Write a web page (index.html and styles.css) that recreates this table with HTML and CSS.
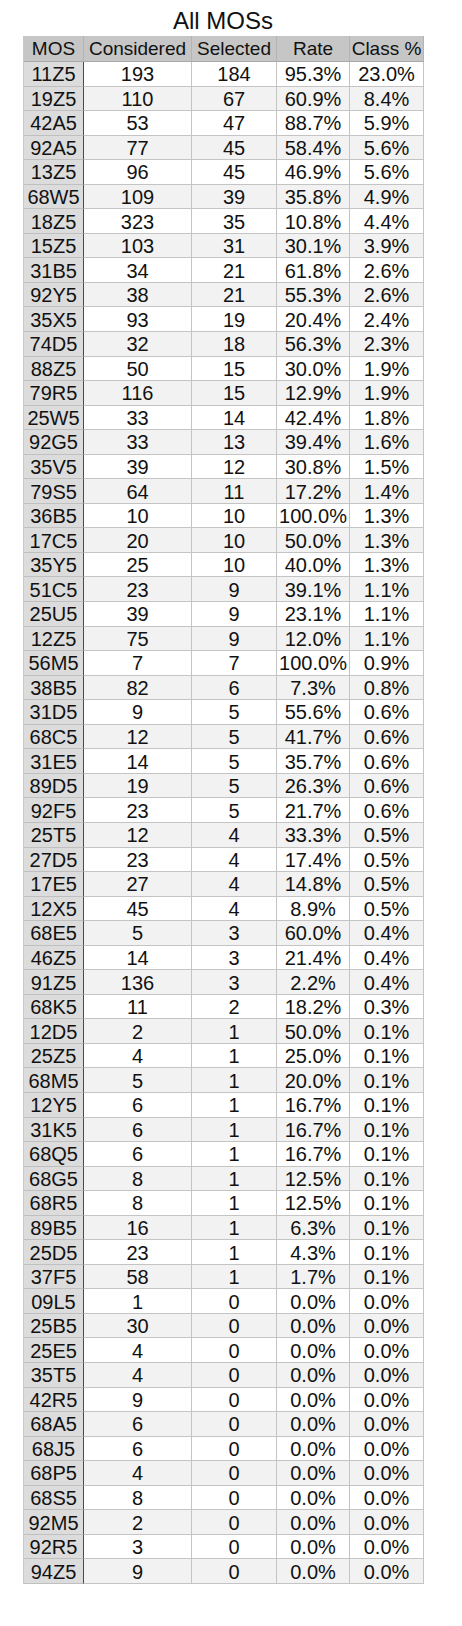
FILE: index.html
```html
<!DOCTYPE html>
<html>
<head>
<meta charset="utf-8">
<link rel="stylesheet" href="styles.css">
</head>
<body>
<div class="title">All MOSs</div>
<div class="sheet">
<div class="row head"><div>MOS</div><div>Considered</div><div>Selected</div><div>Rate</div><div>Class %</div></div>
<div class="row"><div>11Z5</div><div>193</div><div>184</div><div>95.3%</div><div>23.0%</div></div>
<div class="row"><div>19Z5</div><div>110</div><div>67</div><div>60.9%</div><div>8.4%</div></div>
<div class="row"><div>42A5</div><div>53</div><div>47</div><div>88.7%</div><div>5.9%</div></div>
<div class="row"><div>92A5</div><div>77</div><div>45</div><div>58.4%</div><div>5.6%</div></div>
<div class="row"><div>13Z5</div><div>96</div><div>45</div><div>46.9%</div><div>5.6%</div></div>
<div class="row"><div>68W5</div><div>109</div><div>39</div><div>35.8%</div><div>4.9%</div></div>
<div class="row"><div>18Z5</div><div>323</div><div>35</div><div>10.8%</div><div>4.4%</div></div>
<div class="row"><div>15Z5</div><div>103</div><div>31</div><div>30.1%</div><div>3.9%</div></div>
<div class="row"><div>31B5</div><div>34</div><div>21</div><div>61.8%</div><div>2.6%</div></div>
<div class="row"><div>92Y5</div><div>38</div><div>21</div><div>55.3%</div><div>2.6%</div></div>
<div class="row"><div>35X5</div><div>93</div><div>19</div><div>20.4%</div><div>2.4%</div></div>
<div class="row"><div>74D5</div><div>32</div><div>18</div><div>56.3%</div><div>2.3%</div></div>
<div class="row"><div>88Z5</div><div>50</div><div>15</div><div>30.0%</div><div>1.9%</div></div>
<div class="row"><div>79R5</div><div>116</div><div>15</div><div>12.9%</div><div>1.9%</div></div>
<div class="row"><div>25W5</div><div>33</div><div>14</div><div>42.4%</div><div>1.8%</div></div>
<div class="row"><div>92G5</div><div>33</div><div>13</div><div>39.4%</div><div>1.6%</div></div>
<div class="row"><div>35V5</div><div>39</div><div>12</div><div>30.8%</div><div>1.5%</div></div>
<div class="row"><div>79S5</div><div>64</div><div>11</div><div>17.2%</div><div>1.4%</div></div>
<div class="row"><div>36B5</div><div>10</div><div>10</div><div>100.0%</div><div>1.3%</div></div>
<div class="row"><div>17C5</div><div>20</div><div>10</div><div>50.0%</div><div>1.3%</div></div>
<div class="row"><div>35Y5</div><div>25</div><div>10</div><div>40.0%</div><div>1.3%</div></div>
<div class="row"><div>51C5</div><div>23</div><div>9</div><div>39.1%</div><div>1.1%</div></div>
<div class="row"><div>25U5</div><div>39</div><div>9</div><div>23.1%</div><div>1.1%</div></div>
<div class="row"><div>12Z5</div><div>75</div><div>9</div><div>12.0%</div><div>1.1%</div></div>
<div class="row"><div>56M5</div><div>7</div><div>7</div><div>100.0%</div><div>0.9%</div></div>
<div class="row"><div>38B5</div><div>82</div><div>6</div><div>7.3%</div><div>0.8%</div></div>
<div class="row"><div>31D5</div><div>9</div><div>5</div><div>55.6%</div><div>0.6%</div></div>
<div class="row"><div>68C5</div><div>12</div><div>5</div><div>41.7%</div><div>0.6%</div></div>
<div class="row"><div>31E5</div><div>14</div><div>5</div><div>35.7%</div><div>0.6%</div></div>
<div class="row"><div>89D5</div><div>19</div><div>5</div><div>26.3%</div><div>0.6%</div></div>
<div class="row"><div>92F5</div><div>23</div><div>5</div><div>21.7%</div><div>0.6%</div></div>
<div class="row"><div>25T5</div><div>12</div><div>4</div><div>33.3%</div><div>0.5%</div></div>
<div class="row"><div>27D5</div><div>23</div><div>4</div><div>17.4%</div><div>0.5%</div></div>
<div class="row"><div>17E5</div><div>27</div><div>4</div><div>14.8%</div><div>0.5%</div></div>
<div class="row"><div>12X5</div><div>45</div><div>4</div><div>8.9%</div><div>0.5%</div></div>
<div class="row"><div>68E5</div><div>5</div><div>3</div><div>60.0%</div><div>0.4%</div></div>
<div class="row"><div>46Z5</div><div>14</div><div>3</div><div>21.4%</div><div>0.4%</div></div>
<div class="row"><div>91Z5</div><div>136</div><div>3</div><div>2.2%</div><div>0.4%</div></div>
<div class="row"><div>68K5</div><div>11</div><div>2</div><div>18.2%</div><div>0.3%</div></div>
<div class="row"><div>12D5</div><div>2</div><div>1</div><div>50.0%</div><div>0.1%</div></div>
<div class="row"><div>25Z5</div><div>4</div><div>1</div><div>25.0%</div><div>0.1%</div></div>
<div class="row"><div>68M5</div><div>5</div><div>1</div><div>20.0%</div><div>0.1%</div></div>
<div class="row"><div>12Y5</div><div>6</div><div>1</div><div>16.7%</div><div>0.1%</div></div>
<div class="row"><div>31K5</div><div>6</div><div>1</div><div>16.7%</div><div>0.1%</div></div>
<div class="row"><div>68Q5</div><div>6</div><div>1</div><div>16.7%</div><div>0.1%</div></div>
<div class="row"><div>68G5</div><div>8</div><div>1</div><div>12.5%</div><div>0.1%</div></div>
<div class="row"><div>68R5</div><div>8</div><div>1</div><div>12.5%</div><div>0.1%</div></div>
<div class="row"><div>89B5</div><div>16</div><div>1</div><div>6.3%</div><div>0.1%</div></div>
<div class="row"><div>25D5</div><div>23</div><div>1</div><div>4.3%</div><div>0.1%</div></div>
<div class="row"><div>37F5</div><div>58</div><div>1</div><div>1.7%</div><div>0.1%</div></div>
<div class="row"><div>09L5</div><div>1</div><div>0</div><div>0.0%</div><div>0.0%</div></div>
<div class="row"><div>25B5</div><div>30</div><div>0</div><div>0.0%</div><div>0.0%</div></div>
<div class="row"><div>25E5</div><div>4</div><div>0</div><div>0.0%</div><div>0.0%</div></div>
<div class="row"><div>35T5</div><div>4</div><div>0</div><div>0.0%</div><div>0.0%</div></div>
<div class="row"><div>42R5</div><div>9</div><div>0</div><div>0.0%</div><div>0.0%</div></div>
<div class="row"><div>68A5</div><div>6</div><div>0</div><div>0.0%</div><div>0.0%</div></div>
<div class="row"><div>68J5</div><div>6</div><div>0</div><div>0.0%</div><div>0.0%</div></div>
<div class="row"><div>68P5</div><div>4</div><div>0</div><div>0.0%</div><div>0.0%</div></div>
<div class="row"><div>68S5</div><div>8</div><div>0</div><div>0.0%</div><div>0.0%</div></div>
<div class="row"><div>92M5</div><div>2</div><div>0</div><div>0.0%</div><div>0.0%</div></div>
<div class="row"><div>92R5</div><div>3</div><div>0</div><div>0.0%</div><div>0.0%</div></div>
<div class="row"><div>94Z5</div><div>9</div><div>0</div><div>0.0%</div><div>0.0%</div></div>
</div>
</body>
</html>
```
FILE: styles.css
```css
html, body {
  margin: 0;
  padding: 0;
  background: #ffffff;
}
body {
  font-family: "Liberation Sans", Arial, sans-serif;
  color: #111111;
}
.title {
  width: 446px;
  text-align: center;
  font-size: 24px;
  line-height: 24px;
  padding: 9px 0 3px;
}
.sheet {
  margin-left: 23px;
  width: 400px;
  display: grid;
  grid-template-columns: 60px 108px 85px 73px 74px;
  grid-template-rows: 26px;
  grid-auto-rows: 24.56px;
  font-size: 20px;
  border-left: 1px solid #c8c8c8;
  box-sizing: border-box;
}
.row {
  display: contents;
}
.row > div {
  display: flex;
  align-items: center;
  justify-content: center;
  white-space: nowrap;
  overflow: hidden;
  box-sizing: border-box;
  border-right: 1px solid #c4c4c4;
  border-bottom: 1px solid #c4c4c4;
  background: #ffffff;
  line-height: 20px;
  padding-top: 1px;
}
.row:nth-child(odd) > div {
  background: #f2f2f2;
}
.row > div:first-child {
  background: #dcdcdc;
  border-right: 1px solid #4a4a4a;
  border-bottom-color: #c0c0c0;
}
.row.head > div {
  background: #c6c6c6;
  border-right-color: #b4b4b4;
  border-bottom-color: #a8a8a8;
  font-size: 19px;
}
.row.head > div:first-child {
  border-right-color: #b4b4b4;
}
```
